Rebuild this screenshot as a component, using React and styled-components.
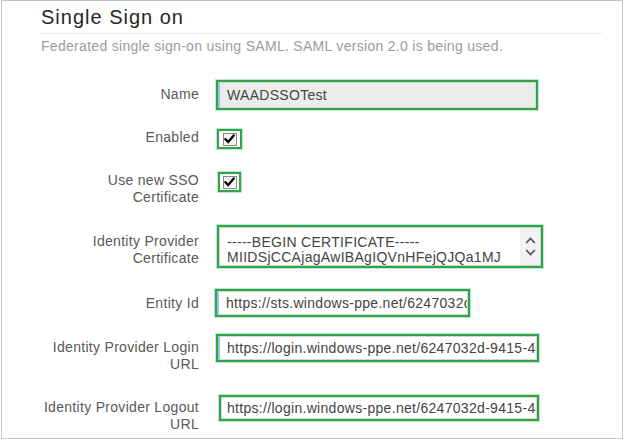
import React from "react";
import styled, { createGlobalStyle } from "styled-components";

const Global = createGlobalStyle`
  html, body { margin: 0; padding: 0; background: #fff; }
  body { font-family: "Liberation Sans", Arial, sans-serif; }
`;

const Frame = styled.div`
  box-sizing: border-box;
  margin-left: 1px;
  width: 622px;
  height: 439px;
  border: 1px solid #c4c4c4;
  overflow: hidden;
`;

const Header = styled.header`
  padding: 4px 20px 0 39px;
`;

const Title = styled.h1`
  margin: 0;
  font-size: 20px;
  line-height: 24px;
  font-weight: normal;
  letter-spacing: 1px;
  color: #262626;
`;

const Divider = styled.div`
  margin: 4px 0 0 -1px;
  height: 1px;
  background: #ececec;
`;

const Subtitle = styled.p`
  margin: 4px 0 0;
  font-size: 14px;
  line-height: 17px;
  letter-spacing: 0.3px;
  color: #9c9c9c;
`;

const Form = styled.div`
  display: flex;
  flex-direction: column;
`;

const Row = styled.div`
  display: grid;
  grid-template-columns: 198px auto;
  column-gap: 16px;
  align-items: start;
  justify-items: start;
  margin-top: ${(p) => p.$gap}px;
`;

const Label = styled.div`
  justify-self: stretch;
  text-align: right;
  padding: ${(p) => p.$offset}px 1px 0 0;
  font-size: 14px;
  line-height: 17px;
  letter-spacing: 0.3px;
  color: #595959;
`;

const Highlight = styled.div`
  box-sizing: border-box;
  display: flex;
  align-items: center;
  justify-content: center;
  width: ${(p) => p.$w}px;
  height: ${(p) => p.$h}px;
  margin-left: ${(p) => p.$indent || 0}px;
  border: 2px solid #2ca54b;
  box-shadow: 0 0 0 1px rgba(44, 165, 75, 0.28);
`;

const TextInput = styled.input`
  box-sizing: border-box;
  width: 100%;
  height: 100%;
  margin: 0;
  padding: 0 0 0 ${(p) => (p.$focus ? 7 : 5)}px;
  border: 1px solid #d6d6d6;
  border-left: ${(p) => (p.$focus ? "2px solid #8fc3ea" : "1px solid #d6d6d6")};
  background: ${(p) => p.$bg || "#fff"};
  font-family: "Liberation Sans", Arial, sans-serif;
  font-size: 14px;
  letter-spacing: 0.3px;
  color: #444;
  outline: none;
`;

const CheckBox = styled.span`
  box-sizing: border-box;
  display: flex;
  align-items: center;
  justify-content: center;
  width: 14px;
  height: 13px;
  border: 1px solid #8a8a8a;
  background: #f3f3f3;
`;

const CertBox = styled.div`
  box-sizing: border-box;
  display: flex;
  width: 100%;
  height: 100%;
  border: 1px solid #d2d2d2;
  overflow: hidden;
`;

const CertText = styled.div`
  flex: 1;
  overflow: hidden;
  padding: 7px 0 0 7px;
  font-size: 14px;
  line-height: 15px;
  letter-spacing: 0.3px;
  color: #444;
  white-space: pre;
`;

const ScrollCol = styled.div`
  width: 20px;
  display: flex;
  flex-direction: column;
  align-items: center;
  justify-content: center;
  gap: 5px;
  background: #f2f2f2;
`;

const Check = () => (
  <svg width="11" height="10" viewBox="0 0 11 10">
    <path d="M1.5 5.2 L4.2 8 L9.6 1.6" fill="none" stroke="#000" strokeWidth="2.2" strokeLinecap="square" />
  </svg>
);

const Chevron = ({ up }) => (
  <svg width="11" height="7" viewBox="0 0 11 7">
    <path
      d={up ? "M1.2 6 L5.5 1.5 L9.8 6" : "M1.2 1 L5.5 5.5 L9.8 1"}
      fill="none"
      stroke="#555"
      strokeWidth="1.8"
    />
  </svg>
);

export default function App() {
  return (
    <>
      <Global />
      <Frame>
        <Header>
          <Title>Single Sign on</Title>
          <Divider />
          <Subtitle>Federated single sign-on using SAML. SAML version 2.0 is being used.</Subtitle>
        </Header>
        <Form>
          <Row $gap={25}>
            <Label $offset={6}>Name</Label>
            <Highlight $w={322} $h={30}>
              <TextInput readOnly $focus $bg="#ececec" defaultValue="WAADSSOTest" />
            </Highlight>
          </Row>
          <Row $gap={19}>
            <Label $offset={0}>Enabled</Label>
            <Highlight $w={25} $h={20} $indent={1}>
              <CheckBox><Check /></CheckBox>
            </Highlight>
          </Row>
          <Row $gap={23}>
            <Label $offset={0}>
              Use new SSO
              <br />
              Certificate
            </Label>
            <Highlight $w={23} $h={20} $indent={2}>
              <CheckBox><Check /></CheckBox>
            </Highlight>
          </Row>
          <Row $gap={19}>
            <Label $offset={8}>
              Identity Provider
              <br />
              Certificate
            </Label>
            <Highlight $w={326} $h={43} $indent={1}>
              <CertBox>
                <CertText>{"-----BEGIN CERTIFICATE-----\nMIIDSjCCAjagAwIBAgIQVnHFejQJQa1MJ"}</CertText>
                <ScrollCol>
                  <Chevron up />
                  <Chevron />
                </ScrollCol>
              </CertBox>
            </Highlight>
          </Row>
          <Row $gap={21}>
            <Label $offset={6}>Entity Id</Label>
            <Highlight $w={255} $h={28} $indent={-1}>
              <TextInput readOnly $focus defaultValue="https://sts.windows-ppe.net/6247032d-9415-403c-b72b-277e3fb06b6a/" />
            </Highlight>
          </Row>
          <Row $gap={17}>
            <Label $offset={5}>
              Identity Provider Login
              <br />
              URL
            </Label>
            <Highlight $w={323} $h={28}>
              <TextInput readOnly $focus defaultValue="https://login.windows-ppe.net/6247032d-9415-403c-b72b-277e3fb06b6a/saml2" />
            </Highlight>
          </Row>
          <Row $gap={22}>
            <Label $offset={4}>
              Identity Provider Logout
              <br />
              URL
            </Label>
            <Highlight $w={320} $h={26} $indent={3}>
              <TextInput readOnly defaultValue="https://login.windows-ppe.net/6247032d-9415-403c-b72b-277e3fb06b6a/saml2" />
            </Highlight>
          </Row>
        </Form>
      </Frame>
    </>
  );
}
